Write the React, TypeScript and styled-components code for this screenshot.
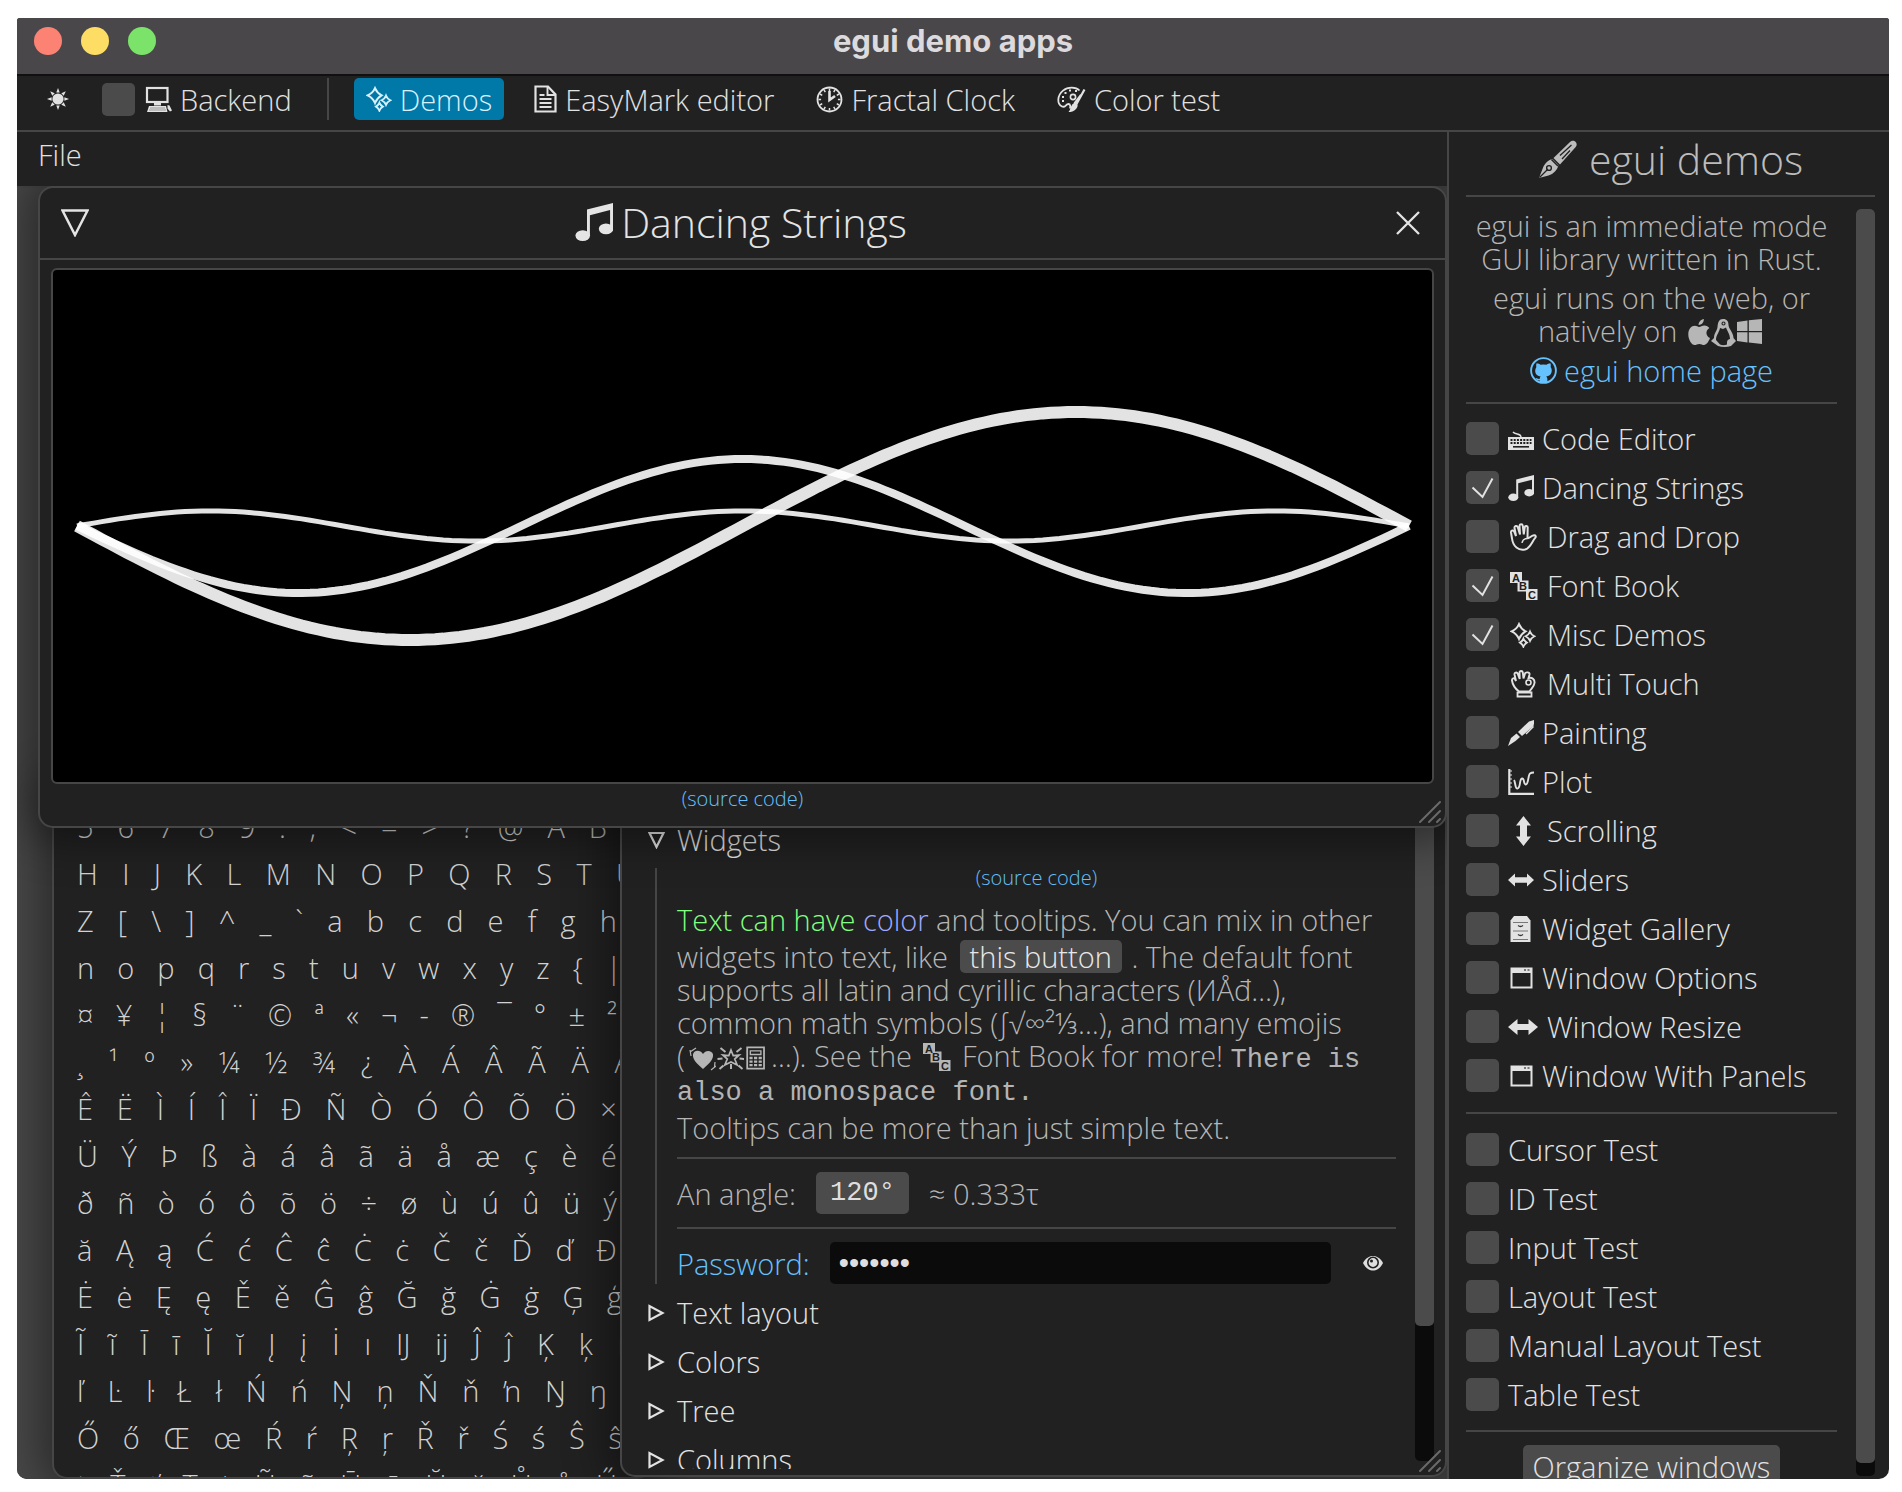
import React, { useState } from "react";
import styled, { createGlobalStyle, css } from "styled-components";

const BODY_FONT = '"Open Sans", "Noto Sans", sans-serif';
const MONO_FONT = '"Liberation Mono", "DejaVu Sans Mono", monospace';

const color = {
  panel: "#212121",
  line: "#464646",
  widget: "#4b4b4b",
  text: "#b6b6b6",
  strong: "#e2e2e2",
  link: "#66c2ff",
  well: "#0b0b0b",
};

const size = { small: 20, mono: 27, body: 29, heading: 41 };

const GlobalStyle = createGlobalStyle`
  * { box-sizing: border-box; }
  html, body { margin: 0; background: #fff; }
  body {
    padding: 18px 13px 13px 17px;
    font-family: ${BODY_FONT};
    font-weight: 300;
    font-size: ${size.body}px;
    line-height: 33px;
    color: ${color.text};
  }
  button, input { font: inherit; color: inherit; }
  p, h1, h2 { margin: 0; font-weight: inherit; }
`;

/* ---------- application frame ---------- */

const Frame = styled.div`
  display: flex;
  flex-direction: column;
  height: calc(100vh - 31px);
  min-height: 600px;
  background: ${color.panel};
  border-radius: 3px 3px 10px 10px;
  overflow: hidden;
`;

const TitleBar = styled.header`
  display: grid;
  grid-template-columns: 1fr auto 1fr;
  align-items: center;
  flex: none;
  height: 58px;
  padding: 0 17px 10px;
  background: #4a474a;
  border-bottom: 2px solid #101010;
`;

const Lights = styled.div`
  display: flex;
  gap: 19px;
`;

const Light = styled.button<{ $tint: string }>`
  width: 28px;
  height: 28px;
  padding: 0;
  border: 0;
  border-radius: 50%;
  background: ${(p) => p.$tint};
`;

const AppTitle = styled.h1`
  padding-bottom: 2px;
  font: 700 31px/33px Inter, sans-serif;
  color: #dcdadd;
`;

const Toolbar = styled.nav`
  display: flex;
  align-items: center;
  flex: none;
  height: 56px;
  padding: 0 17px 8px;
  border-bottom: 2px solid ${color.line};
  color: ${color.strong};
`;

const IconButton = styled.button`
  display: flex;
  align-items: center;
  justify-content: center;
  width: 48px;
  height: 33px;
  margin-right: 20px;
  padding: 0;
  border: 0;
  background: none;
`;

const ToolDivider = styled.span`
  width: 2px;
  height: 42px;
  margin: 0 25px 0 35px;
  background: ${color.line};
`;

const Tab = styled.button<{ $active?: boolean }>`
  display: flex;
  align-items: center;
  gap: 8px;
  height: 42px;
  margin-right: 18px;
  padding: 0 12px;
  border: 0;
  border-radius: 5px;
  background: ${(p) => (p.$active ? "#0078a8" : "none")};
  color: ${(p) => (p.$active ? "#d8f0fc" : "inherit")};
`;

const Main = styled.div`
  display: flex;
  flex: 1;
  min-height: 0;
`;

const Workspace = styled.main`
  display: flex;
  flex-direction: column;
  flex: 1;
  min-width: 0;
`;

const MenuBar = styled.div`
  display: flex;
  align-items: center;
  flex: none;
  height: 54px;
  padding: 0 21px 9px;
`;

const MenuButton = styled.button`
  padding: 0;
  border: 0;
  background: none;
  color: ${color.strong};
`;

const Desktop = styled.div`
  position: relative;
  flex: 1;
  overflow: hidden;
  background: #484848;
  &::before {
    content: "";
    position: absolute;
    inset: 0 0 auto;
    height: 2px;
    background: ${color.line};
  }
`;

/* ---------- floating windows ---------- */

const windowBox = css`
  position: absolute;
  display: flex;
  background: ${color.panel};
  border: 2px solid ${color.line};
  border-radius: 15px;
  box-shadow: 0 0 44px 12px rgba(0, 0, 0, 0.42);
`;

const StringsWindow = styled.section`
  ${windowBox}
  flex-direction: column;
  top: 0;
  left: 21px;
  right: 0;
`;

const FontWindow = styled.section`
  ${windowBox}
  flex-direction: column;
  top: 600px;
  left: 35px;
  width: 600px;
  bottom: 0;
  padding: 15px 0 0 23px;
  overflow: hidden;
`;

const MiscWindow = styled.section`
  ${windowBox}
  top: 600px;
  left: 603px;
  right: 0;
  bottom: 2px;
`;

const WindowHeader = styled.header`
  display: grid;
  grid-template-columns: 1fr auto 1fr;
  align-items: center;
  height: 72px;
  padding: 0 24px 0 21px;
  border-bottom: 2px solid ${color.line};
  color: #e4e4e4;
`;

const HeaderButton = styled.button<{ $end?: boolean }>`
  display: flex;
  justify-self: ${(p) => (p.$end ? "end" : "start")};
  padding: 0;
  border: 0;
  background: none;
`;

const WindowTitle = styled.h2`
  display: flex;
  align-items: center;
  gap: 8px;
  padding-bottom: 2px;
  font-size: ${size.heading}px;
`;

const WindowBody = styled.div`
  display: flex;
  flex-direction: column;
  align-items: center;
  padding: 8px 11px 12px;
`;

const StringsCanvas = styled.svg`
  display: block;
  width: 100%;
  height: auto;
  border: 2px solid ${color.line};
  border-radius: 6px;
  background: #000;
`;

const SourceLink = styled.a`
  font-size: ${size.small}px;
  line-height: 30px;
  color: ${color.link};
  text-decoration: none;
`;

const Grip = styled.svg`
  position: absolute;
  right: 1px;
  bottom: 1px;
  width: 26px;
  height: 26px;
`;

const GlyphRow = styled.div<{ $span: number }>`
  display: flex;
  flex: none;
  align-items: center;
  justify-content: space-between;
  width: ${(p) => p.$span}px;
  height: 47px;
`;

const Glyph = styled.button`
  padding: 0;
  border: 0;
  background: none;
  color: #d2d2d2;
`;

/* ---------- misc demo contents ---------- */

const MiscScroll = styled.div`
  flex: 1;
  min-width: 0;
  margin-bottom: 6px;
  padding: 35px 19px 0 26px;
  overflow: hidden;
`;

const Section = styled.button`
  display: flex;
  align-items: center;
  gap: 12px;
  height: 33px;
  margin-bottom: 16px;
  padding: 0;
  border: 0;
  background: none;
  color: ${color.strong};
`;

const Indent = styled.div`
  display: flex;
  flex-direction: column;
  margin: -4px 0 12px 7px;
  padding-left: 20px;
  border-left: 2px solid ${color.line};
`;

const IndentSource = styled(SourceLink)`
  align-self: center;
  line-height: 20px;
  margin-bottom: 15px;
`;

const Paragraph = styled.p`
  white-space: nowrap;
  & + & {
    margin-top: 6px;
  }
`;

const Tint = styled.span<{ $tint: string }>`
  color: ${(p) => p.$tint};
`;

const InlineButton = styled.button`
  height: 33px;
  margin: 4px 2px 0 4px;
  padding: 0 10px;
  border: 0;
  border-radius: 5px;
  background: ${color.widget};
  color: #e8e8e8;
`;

const Mono = styled.code`
  font-family: ${MONO_FONT};
  font-size: ${size.mono}px;
  line-height: 1px;
  color: #b4b4b4;
`;

const Rule = styled.hr`
  flex: none;
  width: 100%;
  height: 2px;
  margin: 13px 0;
  border: 0;
  background: ${color.line};
`;

const Field = styled.div`
  display: flex;
  align-items: center;
  gap: 20px;
  height: 42px;
`;

const DragValue = styled.button`
  height: 42px;
  padding: 0 14px;
  border: 0;
  border-radius: 5px;
  background: ${color.widget};
  color: #dedede;
  font-family: ${MONO_FONT};
  font-size: ${size.mono}px;
`;

const LinkLabel = styled.label`
  color: ${color.link};
`;

const Password = styled.input`
  flex: 1;
  min-width: 0;
  height: 42px;
  padding: 0 9px;
  border: 0;
  border-radius: 5px;
  outline: 0;
  background: ${color.well};
  color: #dedede;
  font-family: "DejaVu Sans", sans-serif;
`;

const EyeButton = styled.button`
  display: flex;
  padding: 0 13px 0 12px;
  border: 0;
  background: none;
  color: #dedede;
`;

const Track = styled.div<{ $gapRight: number; $gapBottom: number }>`
  display: flex;
  flex: none;
  width: 19px;
  margin: 0 ${(p) => p.$gapRight}px ${(p) => p.$gapBottom}px 0;
  border-radius: 5px;
  background: ${color.well};
`;

const Thumb = styled.div<{ $share: number }>`
  width: 100%;
  height: ${(p) => p.$share}%;
  border-radius: 5px;
  background: ${color.widget};
`;

/* ---------- demo list ---------- */

const Sidebar = styled.aside`
  display: flex;
  flex-direction: column;
  flex: none;
  width: 442px;
  padding: 0 14px 0 17px;
  border-left: 2px solid ${color.line};
`;

const SideHeading = styled.h2`
  display: flex;
  align-items: center;
  justify-content: center;
  gap: 12px;
  flex: none;
  height: 63px;
  padding-bottom: 8px;
  font-size: ${size.heading}px;
  color: #bcbcbc;
`;

const SideRule = styled(Rule)<{ $above: number; $below: number }>`
  margin: ${(p) => p.$above}px 0 ${(p) => p.$below}px;
`;

const SideScroll = styled.div`
  display: flex;
  flex: 1;
  min-height: 0;
  margin-top: 12px;
`;

const SideList = styled.div`
  display: flex;
  flex-direction: column;
  align-items: center;
  flex: 1;
  margin-right: 19px;
  overflow: hidden;
  text-align: center;
  white-space: nowrap;
`;

const InlineIcons = styled.span`
  display: inline-flex;
  gap: 1px;
  height: 26px;
  margin: 0 3px;
  vertical-align: -4px;
`;

const HomeLink = styled.a`
  display: flex;
  align-items: center;
  gap: 7px;
  margin: 7px 0 1px;
  color: ${color.link};
  text-decoration: none;
`;

const Checks = styled.div`
  display: flex;
  flex-direction: column;
  flex: none;
  align-self: stretch;
  gap: 16px;
`;

const CheckLabel = styled.label`
  display: flex;
  align-items: center;
  gap: 8px;
  height: 33px;
  color: ${color.strong};
`;

const CheckStack = styled.span`
  display: grid;
  flex: none;
  width: 33px;
  height: 33px;
  margin-right: 1px;
  & > * {
    grid-area: 1 / 1;
    pointer-events: none;
  }
`;

const CheckInput = styled.input`
  appearance: none;
  width: 33px;
  height: 33px;
  margin: 0;
  border-radius: 5px;
  background: ${color.widget};
  pointer-events: auto;
`;

const OrganizeButton = styled.button`
  flex: none;
  height: 42px;
  padding: 0 10px;
  border: 0;
  border-radius: 5px;
  background: ${color.widget};
  color: ${color.strong};
`;

/* ---------- icons ---------- */

const IconSvg = styled.svg`
  flex: none;
  display: block;
  fill: none;
  stroke: currentColor;
  stroke-width: 2;
`;

type IconProps = { w?: number; h?: number };
type DrawnProps = IconProps & { box?: string; children: React.ReactNode };

const Drawn = ({ w = 26, h = 26, box = "0 0 26 26", children }: DrawnProps) => (
  <IconSvg width={w} height={h} viewBox={box} aria-hidden="true">
    {children}
  </IconSvg>
);

const solid = { fill: "currentColor", stroke: "none" };

const SunIcon = () => (
  <Drawn w={22} h={22} box="0 0 22 22">
    <circle cx="11" cy="11" r="5.6" {...solid} />
    {[0, 45, 90, 135, 180, 225, 270, 315].map((a) => (
      <path key={a} d="M9.3 4.6 11 0l1.7 4.6z" {...solid} transform={`rotate(${a} 11 11)`} />
    ))}
  </Drawn>
);

const ComputerIcon = () => (
  <Drawn w={28}>
    <rect x="2" y="2" width="20.5" height="14" strokeWidth="2.2" />
    <path d="M9 17h7v2.5H9zM4 20h17l1.5 6H2zM22.5 19l2 .5 2.5 5-2 1-2.5-3z" {...solid} />
    <path d="M5 22h15M4 24h17" stroke="#777" strokeWidth=".7" />
  </Drawn>
);

const SparklesIcon = ({ w = 26 }: IconProps) => (
  <Drawn w={w}>
    <path d="M9 2.2Q11 7 15.6 9.4 11 12 9 17 7 12 1.6 9.4 7 7 9 2.2z" strokeWidth="2" />
    <path d="M20 9.6q1.2 3.2 4.4 4.6-3.2 1.6-4.4 4.6-1.2-3-4.4-4.6 3.2-1.4 4.4-4.6z" strokeWidth="1.8" />
    <path d="M13.4 16.6q1 2.6 3.4 4-2.4 1.4-3.4 4.2-1-2.8-3.4-4.2 2.4-1.4 3.4-4z" strokeWidth="1.8" />
  </Drawn>
);

const DocIcon = () => (
  <Drawn w={23} h={28} box="0 0 23 28">
    <path d="M1.5 1.5h12.5l7.5 8v17h-20z" strokeWidth="2.2" />
    <path d="M13.5 1.5v8.500h8M5.500 10h5M5.500 14h12M5.500 18h12M5.500 22h12" strokeWidth="1.9" />
  </Drawn>
);

const ClockIcon = () => (
  <Drawn w={27} h={27} box="0 0 27 27">
    <circle cx="13.500" cy="13.500" r="12" strokeWidth="1.800" />
    <path d="M13.500 5v9l5.500-4" strokeWidth="2.600" />
    {Array.from({ length: 12 }, (_, i) => (
      <path key={i} d="M13.500 2.500v2.600" strokeWidth="1.500" transform={`rotate(${i * 30} 13.5 13.5)`} />
    ))}
  </Drawn>
);

const PaletteIcon = () => (
  <Drawn w={29} h={27} box="0 0 29 27">
    <path
      d="M22.500 4.500C19 .8 11 .4 6 4.600 0 9.600-.2 18 5 20.500c3.500 1.500 3.500-2.500 6.500-2.500 2 0 2 3 1.500 4.500"
      strokeWidth="1.800"
    />
    <circle cx="16" cy="11" r="2.600" strokeWidth="1.600" />
    <path d="M12 4.500h2M7.500 7h2M5 11h2M5 15h2M18 5h2" strokeWidth="2" />
    <path d="M27.500 3.500 19.500 18M24 9l-6.500 8.500" strokeWidth="2.200" />
    <path d="M18.500 16.500c2.500 1 3 4 .5 6.500-2 2.500-5 3-7.500 3 2.500-2 1.500-8 7-9.500z" {...solid} />
  </Drawn>
);

const MusicIcon = ({ w = 26 }: IconProps) => (
  <Drawn w={w} h={w}>
    <path d="M8.200 4.500 26 0v4.300L10.200 8.300v14H8.200z" {...solid} />
    <path d="M24 2h2v17h-2z" {...solid} />
    <ellipse cx="5.300" cy="22.300" rx="5" ry="3.700" {...solid} />
    <ellipse cx="21.200" cy="17.700" rx="4.900" ry="3.700" {...solid} />
  </Drawn>
);

const FountainPenIcon = () => (
  <Drawn w={39} h={39} box="0 0 39 39">
    <path d="M32 2c2-2 4.500-1.500 5.500-.2 1.500 1.500 1.600 3.500.2 5.200L22 24.500 15.500 18z" {...solid} />
    <path d="M14.500 19l6 6c-1 5-5 9-10 10.500L1 38l3.500-9C6 24 10 20 14.500 19z" {...solid} />
    <path d="M1.500 37.500 10 29M22 15.500 33.500 5M24 19l8-8.500" stroke={color.panel} strokeWidth="1.300" />
    <circle cx="11" cy="28" r="2.400" stroke={color.panel} strokeWidth="1.400" />
    <path d="M13.500 19.500l6.500 6.500" stroke={color.panel} strokeWidth="1.600" />
  </Drawn>
);

const AppleIcon = () => (
  <Drawn w={22} h={27} box="0 0 22 27">
    <path
      d="M15.800 0c.3 3-2.200 6-5.200 6C10.300 3.300 13 .4 15.800 0zM11 8c1.500 0 3-1.500 5.500-1.500 2 0 3.700 1 4.800 2.600-4.300 2.700-3.500 8.200.7 10-1 3-3.500 7-6 7-1.700 0-2.500-1.100-4.700-1.100s-3 1.100-4.600 1.100C3.500 26.100.3 20.500.3 15.500c0-5.500 3.200-8.700 6.400-8.700C8.700 6.800 10 8 11 8z"
      {...solid}
    />
  </Drawn>
);

const PenguinIcon = () => (
  <Drawn w={25} h={28} box="0 0 25 28">
    <path
      d="M12 0c4 0 5.500 2.500 5.500 6 0 3.500 5 7.500 5 13l2.500 3-5 5c-4 1.300-9 1.300-13 0L0 22l3-3c0-5 3-7 3.500-11C7 3 8 0 12 0zM9 9c-.5 4-4 7-4 12l4 4.500c2 1 5 1 7 0 0-3 0-5 3-5.500C19 15 16 12 15 8.500L12 10z"
      {...solid}
      fillRule="evenodd"
    />
    <circle cx="12.500" cy="4.500" r="1.500" stroke={color.panel} strokeWidth="1.100" />
  </Drawn>
);

const WindowsIcon = () => (
  <Drawn w={25} h={25} box="0 0 25 25">
    <path d="M0 3l10.500-1.500V12H0zM11.800 1.300 25 0v12H11.800zM0 13.200h10.500v10.300L0 22zM11.800 13.200H25V25l-13.200-1.500z" {...solid} />
  </Drawn>
);

const GithubIcon = () => (
  <Drawn w={27} h={27} box="0 0 27 27">
    <circle cx="13.500" cy="13.500" r="12.400" strokeWidth="1.900" />
    <path
      d="M6.600 6.200c1.700 0 3 .8 4 1.600a14 14 0 0 1 5.800 0c1-.8 2.300-1.600 4-1.600.6 1.600.5 2.800.2 3.700 2.400 3.300 1.200 9-4.400 9.500 1 1 1.200 2 1.200 3.300v3H9.600v-2.400c-2 .3-3.300-.3-4-2.200 1.700-.2 2 1.200 4 .8 0-1 .3-1.800 1-2.500-5.500-.5-6.600-6-4.200-9.500-.3-.9-.4-2.100.2-3.700z"
      {...solid}
    />
  </Drawn>
);

const KeyboardIcon = () => (
  <Drawn>
    <path d="M0 11h26v13H0z" {...solid} />
    <path d="M2.500 14h21M2.500 17h21" stroke={color.panel} strokeWidth="1.800" strokeDasharray="2 1.200" />
    <path d="M5 20.800h16" stroke={color.panel} strokeWidth="1.600" />
    <path d="M13 11C13 7 7 9 5 6" strokeWidth="1.400" />
  </Drawn>
);

const HandIcon = () => (
  <Drawn w={31} h={28} box="0 0 31 28">
    <path
      d="M4 15.500 3 9.500c-.3-2.200 2.400-2.900 3.200-.9L8 13 6.500 5c-.3-2.200 2.600-2.900 3.300-.8L12 11.500 11.500 3c0-2.200 3-2.400 3.300-.2l1 8.500.9-7c.4-2 3.200-1.700 3 .4L19.500 15c1.500 1 3-2.300 6.500-2.700 1.800-.1 2.300 1.300 1.200 2.600-3.200 3.500-4.700 10.100-10.200 11.600C10.500 28 5 23.500 4 15.500z"
      strokeWidth="2"
    />
    <path d="M14 20c.5-3 3-4.500 5.500-4.500" strokeWidth="1.400" />
  </Drawn>
);

const AbcText = styled.text`
  font: 700 11px "Liberation Sans", sans-serif;
  fill: ${color.panel};
  stroke: none;
`;

const AbcIcon = ({ w = 31 }: IconProps) => (
  <Drawn w={w} h={28} box={`${w === 31 ? 0 : 2} 0 ${w} 28`}>
    <path d="M2 0h12v11H2zM9.500 8.500h11v11h-11zM18 17h11.500v11H18z" {...solid} />
    <AbcText x="4" y="9.500">A</AbcText>
    <AbcText x="11" y="18">B</AbcText>
    <AbcText x="20" y="26.500">C</AbcText>
  </Drawn>
);

const OkHandIcon = () => (
  <Drawn w={31} h={28} box="0 0 31 28">
    <path
      d="M11 21.500C7 18.500 4.500 14 4 10.500c-.3-2.400 2.400-3 3.200-1L8 11 6.500 4.500c-.4-2 2.400-2.700 3.200-.8l2 5.300L11.500 2.500c0-2 3-2 3.300 0l.7 6 1.500-5c.7-1.800 5-1.500 4.500 1l-1 3.500c3.500-1 6.500 1.500 6 5-.4 4-3.500 5.500-5 8.500z"
      strokeWidth="1.900"
    />
    <circle cx="20.500" cy="12.500" r="2.500" strokeWidth="1.600" />
    <path d="M9.500 22.500h14v4h-14z" strokeWidth="1.800" />
  </Drawn>
);

const PaintPenIcon = () => (
  <Drawn>
    <path d="M0 26 3 18l5.500-4.500 3.500 3.500L7.500 21z" {...solid} />
    <path d="M10 12 21 1.500 26 0v3.500L25.500 6 14 16z" {...solid} />
    <path d="M25.500 6.500 18 14" strokeWidth="1.500" />
  </Drawn>
);

const PlotIcon = () => (
  <Drawn>
    <path d="M1.300 0v24.800H26" strokeWidth="2.200" />
    <path d="M2 2h2M2 6h2M2 10h2M2 14h2M2 18h2" strokeWidth="1.200" />
    <path d="M6 11c1.500 2 1 9 3.500 8.500C13 19 11 10 14 9.500c3-.3 1 6 3.800 6S20 6 22 4.500c1-.8 2.500-1 4-1" strokeWidth="1.900" />
  </Drawn>
);

const UpDownIcon = () => (
  <Drawn w={31} h={30} box="0 0 31 30">
    <path d="M15.500 0 23 9.500h-4v11h4L15.500 30 8 20.500h4v-11H8z" {...solid} />
  </Drawn>
);

const LeftRightIcon = () => (
  <Drawn>
    <path d="M0 13l7-6.500v3.700h12V6.500L26 13l-7 6.500v-3.700H7v3.700z" {...solid} />
  </Drawn>
);

const ResizeIcon = () => (
  <Drawn w={31} box="0 0 31 26">
    <path d="M0 13 9.500 5v5h11V5l9.500 8-9.500 8v-5h-11v5z" {...solid} />
  </Drawn>
);

const CabinetIcon = () => (
  <Drawn>
    <path d="M6 0h13l3.500 4.500V26h-20V4.500z" {...solid} />
    <path d="M5 6.500h15M5 15h15M5 23.500h15" stroke="#777" strokeWidth="1" />
    <path d="M10 9.500q2.500 2 5 0M10 18.500q2.500 2 5 0" stroke="#333" strokeWidth="1.300" />
  </Drawn>
);

const WindowIcon = () => (
  <Drawn>
    <path d="M3.500 3.500h20v19h-20z" strokeWidth="2" />
    <path d="M3 3h21v5H3z" {...solid} />
    <path d="M16 5h2M19.500 5h2" stroke="#555" strokeWidth="1.300" />
  </Drawn>
);

const HeartIcon = () => (
  <Drawn w={28}>
    <path d="M14 24C7 18 3.500 14 4 9.500 4.500 5 11 4 14 9c3-5 9.500-3 10 .500C24.500 14 21 18 14 24z" {...solid} />
    <path d="M1 7l6-4M2 11l-1-6M22 25l5-4M26 17l-.5 5" strokeWidth="1.200" />
  </Drawn>
);

const BurstIcon = () => (
  <Drawn w={27}>
    <path d="M13.500 5l2.200 5.500 6-.500-4.500 4 2.500 6-6.200-3-6.200 3 2.500-6-4.500-4 6 .5z" strokeWidth="1.700" />
    <path d="M3 3l5 4M24 3l-5 4M0 14l5-.5M27 14l-5-.5M2 24l4-3.500M25 24l-4-3.500M13.500 19v5" strokeWidth="2" />
  </Drawn>
);

const CalculatorIcon = () => (
  <Drawn w={23}>
    <path d="M2.500 1h19v24h-19z" strokeWidth="2" />
    <path d="M6 5h12v4H6z" strokeWidth="1.500" />
    <path d="M5 13h14M5 17h14M5 21h14" strokeWidth="2.600" strokeDasharray="3.600 1.600" />
  </Drawn>
);

const EyeIcon = () => (
  <Drawn w={20} h={20} box="0 0 20 20">
    <path d="M0 10C3 4.500 7 3 10 3s7 1.500 10 7c-3 6-7 7.500-10 7.500S3 16 0 10z" {...solid} />
    <circle cx="10" cy="9.500" r="5.200" stroke={color.panel} strokeWidth="1.600" />
    <circle cx="8.500" cy="8" r="1.500" fill={color.panel} stroke="none" />
  </Drawn>
);

const CrossIcon = () => (
  <Drawn>
    <path d="M2 2l22 22M24 2 2 24" strokeWidth="2.300" />
  </Drawn>
);

const ArrowIcon = ({ open }: { open?: boolean }) => (
  <Drawn w={17} h={18} box="0 0 17 18">
    <path d={open ? "M1.500 2h14L8.500 16z" : "M1.500 2v14l13-7z"} strokeWidth="2.200" />
  </Drawn>
);

const CollapseIcon = () => (
  <Drawn w={28} h={28} box="0 0 28 28">
    <path d="M1.500 1.500h25L14 26z" strokeWidth="2.500" />
  </Drawn>
);

const ResizeGrip = () => (
  <Grip viewBox="0 0 26 26" aria-hidden="true">
    <path d="M2 23 22 3M11 23 22 12M19 23l3-3" stroke="#6a6a6a" strokeWidth="2" strokeLinecap="round" />
  </Grip>
);

/* ---------- data ---------- */

const DEMOS: [string, React.ComponentType][] = [
  ["Code Editor", KeyboardIcon],
  ["Dancing Strings", MusicIcon],
  ["Drag and Drop", HandIcon],
  ["Font Book", AbcIcon],
  ["Misc Demos", () => <Drawn w={31} box="-2 0 31 26"><SparklesIcon /></Drawn>],
  ["Multi Touch", OkHandIcon],
  ["Painting", PaintPenIcon],
  ["Plot", PlotIcon],
  ["Scrolling", UpDownIcon],
  ["Sliders", LeftRightIcon],
  ["Widget Gallery", CabinetIcon],
  ["Window Options", WindowIcon],
  ["Window Resize", ResizeIcon],
  ["Window With Panels", WindowIcon],
];

const TESTS = ["Cursor Test", "ID Test", "Input Test", "Layout Test", "Manual Layout Test", "Table Test"];

/* each row of the font book, with the width that its glyphs spread over */
const GLYPH_ROWS: [string, number][] = [
  ["5 6 7 8 9 : ; < = > ? @ A B", 530],
  ["H I J K L M N O P Q R S T U", 560],
  ["Z [ \\ ] ^ _ ` a b c d e f g h", 540],
  ["n o p q r s t u v w x y z { |", 545],
  ["¤ ¥ ¦ § ¨ © ª « ¬ - ® ¯ ° ± ²", 540],
  ["¸ ¹ º » ¼ ½ ¾ ¿ À Á Â Ã Ä Å", 555],
  ["Ê Ë Ì Í Î Ï Ð Ñ Ò Ó Ô Õ Ö ×", 540],
  ["Ü Ý Þ ß à á â ã ä å æ ç è é", 540],
  ["ð ñ ò ó ô õ ö ÷ ø ù ú û ü ý", 540],
  ["ă Ą ą Ć ć Ĉ ĉ Ċ ċ Č č Ď ď Đ", 540],
  ["Ė ė Ę ę Ě ě Ĝ ĝ Ğ ğ Ġ ġ Ģ ģ", 545],
  ["Ĩ ĩ Ī ī Ĭ ĭ Į į İ ı Ĳ ĳ Ĵ ĵ Ķ ķ ĸ", 555],
  ["ľ Ŀ ŀ Ł ł Ń ń Ņ ņ Ň ň ŉ Ŋ ŋ", 530],
  ["Ő ő Œ œ Ŕ ŕ Ŗ ŗ Ř ř Ś ś Ŝ ŝ", 545],
  ["ţ Ť ť Ŧ ŧ Ũ ũ Ū ū Ŭ ŭ Ů ů Ű", 540],
];

const STRINGS = [
  { mode: 2, amplitude: 114, width: 12 },
  { mode: 3, amplitude: 67, width: 8 },
  { mode: 5, amplitude: -15, width: 5 },
];

const wave = (mode: number, amplitude: number) =>
  Array.from({ length: 161 }, (_, i) => {
    const t = i / 160;
    const x = 24 + t * 1332;
    const y = 256 + amplitude * Math.sin(Math.PI * mode * t);
    return `${x.toFixed(1)},${y.toFixed(1)}`;
  }).join(" ");

/* ---------- composed parts ---------- */

type CheckProps = { label: string; Icon?: React.ComponentType; initial?: boolean };

const Check = ({ label, Icon, initial = false }: CheckProps) => {
  const [on, setOn] = useState(initial);
  return (
    <CheckLabel>
      <CheckStack>
        <CheckInput type="checkbox" checked={on} onChange={() => setOn(!on)} />
        {on && (
          <Drawn w={33} h={33} box="0 0 33 33">
            <path d="M6.500 16.500 16.500 26 26.500 7.500" stroke="#e2e2e2" />
          </Drawn>
        )}
      </CheckStack>
      {Icon && <Icon />}
      <span>{label}</span>
    </CheckLabel>
  );
};

const DancingStrings = () => (
  <StringsWindow>
    <WindowHeader>
      <HeaderButton aria-label="Collapse"><CollapseIcon /></HeaderButton>
      <WindowTitle><MusicIcon w={38} />Dancing Strings</WindowTitle>
      <HeaderButton $end aria-label="Close"><CrossIcon /></HeaderButton>
    </WindowHeader>
    <WindowBody>
      <StringsCanvas viewBox="0 0 1379 512" aria-hidden="true">
        {STRINGS.map((s) => (
          <polyline
            key={s.mode}
            points={wave(s.mode, s.amplitude)}
            fill="none"
            stroke="rgba(255, 255, 255, 0.89)"
            strokeWidth={s.width}
          />
        ))}
      </StringsCanvas>
      <SourceLink href="#strings">(source code)</SourceLink>
    </WindowBody>
    <ResizeGrip />
  </StringsWindow>
);

const FontBook = () => (
  <FontWindow>
    {GLYPH_ROWS.map(([row, span]) => (
      <GlyphRow key={row} $span={span}>
        {row.split(" ").map((g) => <Glyph key={g}>{g}</Glyph>)}
      </GlyphRow>
    ))}
  </FontWindow>
);

const MiscDemos = () => (
  <MiscWindow>
    <MiscScroll>
      <Section><ArrowIcon open />Widgets</Section>
      <Indent>
        <IndentSource href="#misc">(source code)</IndentSource>
        <Paragraph>
          <Tint $tint="#80ff80">Text can have</Tint> <Tint $tint="#a0a8ff">color</Tint> and tooltips. You can mix in other
          <br />
          widgets into text, like <InlineButton>this button</InlineButton> . The default font
          <br />
          supports all latin and cyrillic characters (ИÅđ…),
          <br />
          common math symbols (∫√∞²⅓…), and many emojis
          <br />
          (<InlineIcons><HeartIcon /><BurstIcon /><CalculatorIcon /></InlineIcons>…). See the{" "}
          <InlineIcons><AbcIcon w={29} /></InlineIcons> Font Book for more! <Mono>There is</Mono>
          <br />
          <Mono>also a monospace font.</Mono>
        </Paragraph>
        <Paragraph>Tooltips can be more than just simple text.</Paragraph>
        <Rule />
        <Field>
          <span id="angle-label">An angle:</span>
          <DragValue aria-labelledby="angle-label">120°</DragValue>
          <span>≈ 0.333τ</span>
        </Field>
        <Rule />
        <Field>
          <LinkLabel htmlFor="password">Password:</LinkLabel>
          <Password id="password" type="password" defaultValue="hunter2" />
          <EyeButton aria-label="Show password"><EyeIcon /></EyeButton>
        </Field>
      </Indent>
      <Section><ArrowIcon />Text layout</Section>
      <Section><ArrowIcon />Colors</Section>
      <Section><ArrowIcon />Tree</Section>
      <Section><ArrowIcon />Columns</Section>
    </MiscScroll>
    <Track $gapRight={11} $gapBottom={14}><Thumb $share={80} /></Track>
    <ResizeGrip />
  </MiscWindow>
);

const DemoList = () => (
  <Sidebar>
    <SideHeading><FountainPenIcon />egui demos</SideHeading>
    <SideRule $above={0} $below={0} />
    <SideScroll>
      <SideList>
        <Paragraph>egui is an immediate mode<br />GUI library written in Rust.</Paragraph>
        <Paragraph>
          egui runs on the web, or<br />natively on{" "}
          <InlineIcons><AppleIcon /><PenguinIcon /><WindowsIcon /></InlineIcons>
        </Paragraph>
        <HomeLink href="#home"><GithubIcon />egui home page</HomeLink>
        <SideRule $above={14} $below={18} />
        <Checks>
          {DEMOS.map(([label, Icon]) => (
            <Check
              key={label}
              label={label}
              Icon={Icon}
              initial={["Dancing Strings", "Font Book", "Misc Demos"].includes(label)}
            />
          ))}
        </Checks>
        <SideRule $above={20} $below={19} />
        <Checks>
          {TESTS.map((label) => <Check key={label} label={label} />)}
        </Checks>
        <SideRule $above={19} $below={13} />
        <OrganizeButton>Organize windows</OrganizeButton>
      </SideList>
      <Track $gapRight={0} $gapBottom={3}><Thumb $share={99} /></Track>
    </SideScroll>
  </Sidebar>
);

export default function App() {
  return (
    <>
      <GlobalStyle />
      <Frame>
        <TitleBar>
          <Lights>
            <Light $tint="#fc8374" aria-label="Close window" />
            <Light $tint="#fddd64" aria-label="Minimize window" />
            <Light $tint="#7be36a" aria-label="Zoom window" />
          </Lights>
          <AppTitle>egui demo apps</AppTitle>
        </TitleBar>
        <Toolbar>
          <IconButton aria-label="Switch theme"><SunIcon /></IconButton>
          <Check label="Backend" Icon={ComputerIcon} />
          <ToolDivider />
          <Tab $active><SparklesIcon />Demos</Tab>
          <Tab><DocIcon />EasyMark editor</Tab>
          <Tab><ClockIcon />Fractal Clock</Tab>
          <Tab><PaletteIcon />Color test</Tab>
        </Toolbar>
        <Main>
          <Workspace>
            <MenuBar><MenuButton>File</MenuButton></MenuBar>
            <Desktop>
              <FontBook />
              <MiscDemos />
              <DancingStrings />
            </Desktop>
          </Workspace>
          <DemoList />
        </Main>
      </Frame>
    </>
  );
}
